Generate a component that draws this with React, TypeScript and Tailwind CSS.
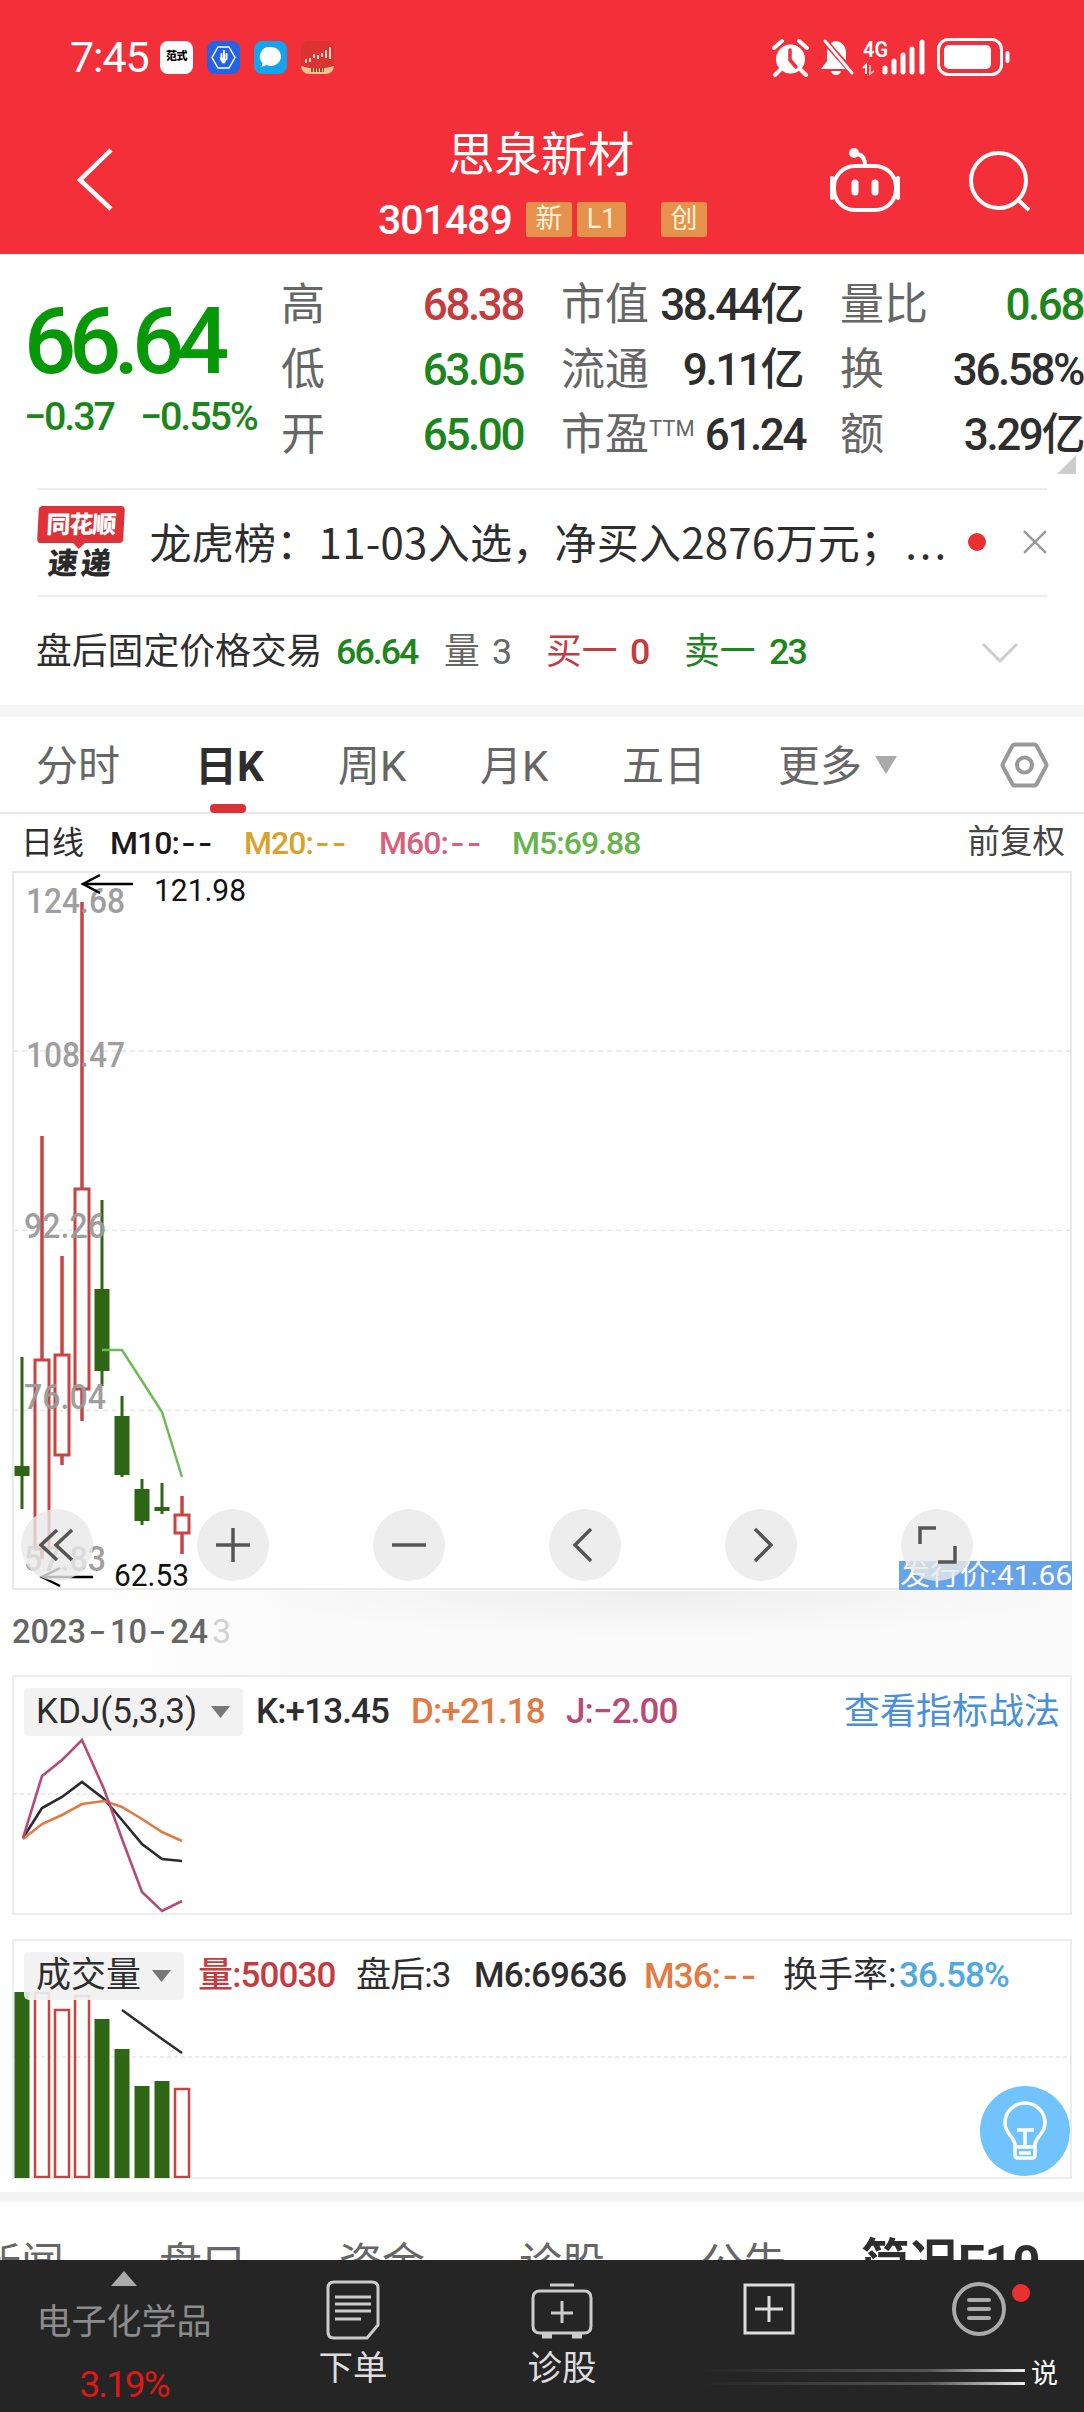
import { useState } from 'react'
import type { ReactNode } from 'react'
import clsx from 'clsx'

type Candle = {
  x: number
  high: number
  low: number
  top: number
  bottom: number
  up?: boolean
  volume: number
}

// y values are canvas coordinates, volume is the top of the bar
const candles: Candle[] = [
  { x: 22, high: 1356, low: 1508, top: 1465, bottom: 1475, volume: 1992 },
  { x: 42, high: 1135, low: 1558, top: 1359, bottom: 1548, up: true, volume: 1992 },
  { x: 62, high: 1255, low: 1464, top: 1354, bottom: 1454, up: true, volume: 2009 },
  { x: 82, high: 901, low: 1420, top: 1188, bottom: 1388, up: true, volume: 1995 },
  { x: 102, high: 1199, low: 1385, top: 1288, bottom: 1370, volume: 2019 },
  { x: 122, high: 1395, low: 1476, top: 1415, bottom: 1474, volume: 2049 },
  { x: 142, high: 1478, low: 1524, top: 1488, bottom: 1520, volume: 2086 },
  { x: 162, high: 1482, low: 1513, top: 1506, bottom: 1510, volume: 2081 },
  { x: 182, high: 1495, low: 1553, top: 1514, bottom: 1532, up: true, volume: 2088 },
]

const axis = [
  { label: '124.68', x: 26, y: 912, w: 99 },
  { label: '108.47', x: 26, y: 1066, w: 99 },
  { label: '92.26', x: 24, y: 1237, w: 82 },
  { label: '76.04', x: 24, y: 1408, w: 82 },
  { label: '57.83', x: 24, y: 1570, w: 82 },
]

const RED = '#c94343'
const GREEN = '#2f6615'

const periods = [
  { label: '分时', w: 'w-[159px]' },
  { label: '日K', w: 'w-[143px]' },
  { label: '周K', w: 'w-[142px]' },
  { label: '月K', w: 'w-[142px]' },
  { label: '五日', w: 'w-[156px]' },
]

const Dashes = () => <span className="ml-[2px] font-[family-name:Inter] tracking-[0.06em]">--</span>

const trackings = {
  tight: 'tracking-[-0.08em]',
  normal: 'tracking-[-0.055em]',
  loose: 'tracking-[-0.025em]',
}

function Num({ className, track = 'normal', children }: { className?: string; track?: keyof typeof trackings; children: ReactNode }) {
  return <span className={clsx('whitespace-nowrap', trackings[track], className)}>{children}</span>
}

function StatusBar() {
  return (
    <div className="flex h-[112px] items-center pl-[70px] pt-[3px] text-white">
      <Num track="loose" className="w-[90px] text-[43px]">7:45</Num>
      <div className="flex gap-[14px]">
        <div className="flex size-[33px] items-center justify-center rounded-lg bg-white text-[11px] font-black tracking-tighter text-black">
          范式
        </div>
        <svg className="size-[33px]" viewBox="0 0 33 33">
          <rect width="33" height="33" rx="8" fill="#2563e4" />
          <path d="M11 6h11l6 10.500-6 10.500H11L5 16.500z" fill="none" stroke="#fff" strokeWidth="1.500" />
          <path d="M12.500 16l2 5q2 3 4 0l1.500-3" fill="#fff" />
          <path d="M14.500 19v-6M17 18v-8M19.500 18v-5" fill="none" stroke="#fff" strokeWidth="2" strokeLinecap="round" />
        </svg>
        <svg className="size-[33px]" viewBox="0 0 33 33">
          <rect width="33" height="33" rx="8" fill="#14a3ef" />
          <path d="M16.500 6a10 9.500 0 1 1-4 18l-5 2 1-4A9.500 9.500 0 0 1 16.500 6z" fill="#fff" />
        </svg>
        <svg className="size-[33px]" viewBox="0 0 33 33">
          <rect width="33" height="33" rx="8" fill="#d93332" />
          <path d="M5 18v4M9 17v4M13 13v4M17 14v4M21 12v4" stroke="#ffd0c4" strokeWidth="2" />
          <path d="M25 9v8M29 6v12" stroke="#ffd0c4" strokeWidth="2" />
          <path d="M0 25q16 5 33 0a8 8 0 0 1-8 8H8a8 8 0 0 1-8-8z" fill="#f6c28f" />
          <path d="M10 29h13" stroke="#9b4a2c" strokeWidth="4" strokeDasharray="2 1" />
        </svg>
      </div>
      <svg className="ml-[438px] h-[40px] w-[240px]" viewBox="772 37 240 40" fill="none">
        <circle cx="790.500" cy="58" r="14.500" fill="#fff" />
        <path d="M774 47l8-7M807 47l-8-7M780 69l-5 5M801 69l5 5" stroke="#fff" strokeWidth="4" strokeLinecap="round" />
        <path d="M790 49v10l6 7" stroke="#f32f39" strokeWidth="3.500" strokeLinecap="round" />
        <path d="M836 40c7 1 10 6 10 12v8l5 8h-30l6-8v-8c0-6 2-11 9-12zM831 70h10q-1 4-5 4t-5-4z" fill="#fff" />
        <path d="M822 37l31 35" stroke="#f32f39" strokeWidth="6" />
        <path d="M825 40l27 32" stroke="#fff" strokeWidth="3" strokeLinecap="round" />
        <text x="863" y="56" fill="#fff" fontSize="22" fontWeight="600" textLength="25" lengthAdjust="spacingAndGlyphs">
          4G
        </text>
        <path d="M863 67l3-3v9" stroke="#fff" strokeWidth="2" />
        <path d="M870 64v9l4-3" stroke="#fff" strokeWidth="2" opacity=".6" />
        <path d="M885 67v4M894 60v11M903 54v17M912 48v23M922 41v30" stroke="#fff" strokeWidth="5" strokeLinecap="round" />
        <rect x="938.500" y="38.500" width="63" height="35" rx="10" stroke="#fff" strokeWidth="3" />
        <rect x="944" y="44" width="47" height="24" rx="5" fill="#fff" />
        <path d="M1007.500 52v8" stroke="#fff" strokeWidth="4" strokeLinecap="round" />
      </svg>
    </div>
  )
}

function Badge({ className, children }: { className?: string; children: ReactNode }) {
  return (
    <span className={clsx('flex h-[35px] items-center justify-center rounded-[3px] bg-[#e5924d] text-[27px] text-[#fff3dc]', className)}>
      {children}
    </span>
  )
}

function Header() {
  return (
    <header className="h-[254px] bg-[#f32f39] text-white">
      <StatusBar />
      <div className="flex h-[142px] items-start">
        <svg className="mt-[34px] ml-[73px] h-[68px] w-[44px]" viewBox="72 146 44 68" fill="none">
          <path d="M110 150L79 180l31 29" stroke="#fff" strokeWidth="4.500" />
        </svg>
        <div className="ml-[261px] flex w-[329px] flex-col">
          <h1 className="mt-[10px] ml-[70px] text-[46.500px] leading-[66px]">思泉新材</h1>
          <div className="mt-[12px] flex items-center">
            <Num track="loose" className="w-[148px] pt-[2px] text-[41px] leading-[36px] font-medium">301489</Num>
            <Badge className="w-[46px]">新</Badge>
            <Badge className="ml-[5px] w-[49px]">L1</Badge>
            <Badge className="ml-[35px] w-[46px]">创</Badge>
          </div>
        </div>
        <svg className="mt-[34px] ml-[121px] h-[70px] w-[208px]" viewBox="828 146 208 70" fill="none" stroke="#fff" strokeWidth="4">
          <rect x="834" y="166" width="62" height="44" rx="21" />
          <path d="M865 166q0-12-9-12" />
          <circle cx="854" cy="153" r="3" fill="#fff" />
          <path d="M832 178v20M898 178v20" strokeLinecap="round" />
          <path d="M855 183v9M875 183v9" strokeWidth="7" strokeLinecap="round" />
          <circle cx="998.500" cy="180.500" r="27.500" />
          <path d="M1017 199l12 11" />
        </svg>
      </div>
    </header>
  )
}

function Stat({ label, value, color = 'text-[#2e2e2e]', className }: { label: ReactNode; value: string; color?: string; className: string }) {
  return (
    <div className={clsx('flex h-[65px] items-center justify-between', className)}>
      <span className="text-[44px] whitespace-nowrap text-[#666]">{label}</span>
      <Num className={clsx('text-[44px] font-medium', color)}>{value}</Num>
    </div>
  )
}

function Quote() {
  const green = 'text-[#1c861c]'
  return (
    <section className="relative flex h-[234px] pt-[18px]">
      <div className="w-[281px] pl-[24px]">
        <Num track="tight" className="mt-[15px] block h-[110px] text-[92px] leading-[110px] font-medium text-[#069806]">66.64</Num>
        <div className="flex text-[39.500px] leading-[40px] font-medium text-[#1c861c]">
          <Num className="w-[116px]">−0.37</Num>
          <Num>−0.55%</Num>
        </div>
      </div>
      <div>
        <Stat className="w-[242px]" label="高" value="68.38" color="text-[#c53c3f]" />
        <Stat className="w-[242px]" label="低" value="63.05" color={green} />
        <Stat className="w-[242px]" label="开" value="65.00" color={green} />
      </div>
      <div className="ml-[38px]">
        <Stat className="w-[241px]" label="市值" value="38.44亿" />
        <Stat className="w-[241px]" label="流通" value="9.11亿" />
        <Stat
          className="w-[244px]"
          label={
            <>
              市盈<span className="inline-block -translate-y-[14px] text-[22px]">TTM</span>
            </>
          }
          value="61.24"
        />
      </div>
      <div className="ml-[35px]">
        <Stat className="w-[243px]" label="量比" value="0.68" color={green} />
        <Stat className="w-[243px]" label="换" value="36.58%" />
        <Stat className="w-[243px]" label="额" value="3.29亿" />
      </div>
      <svg className="absolute right-[8px] bottom-[14px] size-[19px]" viewBox="0 0 19 19">
        <path d="M19 0v19H0z" fill="#ccc" />
      </svg>
    </section>
  )
}

function NewsStrip() {
  return (
    <section className="mx-[37px] flex h-[109px] items-center border-y-2 border-[#eee]">
      <div className="flex w-[88px] flex-col items-center">
        <div className="relative flex h-[37px] w-[86px] -skew-x-3 items-center justify-center rounded-[4px] bg-[#dd3238] text-[24px] font-black tracking-[-1px] text-white">
          同花顺
          <svg className="absolute -bottom-[6px] left-[35px] h-[7px] w-[14px]" viewBox="0 0 14 7">
            <path d="M0 0h14L7 7z" fill="#dd3238" />
          </svg>
        </div>
        <div className="mt-[5px] -skew-x-6 text-[30px] leading-[31px] font-black tracking-[3px] text-[#2a2a2a]">速递</div>
      </div>
      <p className="-mt-[5px] ml-[25px] w-[801px] font-[family-name:Noto_Sans_CJK_SC] text-[42px] tracking-[0.25px] whitespace-nowrap text-[#2e2e2e]">
        龙虎榜：11-03入选，净买入2876万元；<span className="ml-[3px] tracking-[3px]">...</span>
      </p>
      <span className="ml-[19px] size-[18px] -translate-y-px rounded-full bg-[#ea3030]" />
      <svg className="ml-[37px] size-[24px] -translate-y-px" viewBox="0 0 24 24">
        <path d="M1 1l22 22M23 1L1 23" stroke="#999" strokeWidth="2.500" />
      </svg>
    </section>
  )
}

function AfterHours() {
  return (
    <section className="flex h-[108px] items-center pt-[4px] pl-[36px] text-[35.800px] whitespace-nowrap">
      <span className="w-[300px] text-[#2e2e2e]">盘后固定价格交易</span>
      <Num className="w-[108px] font-medium text-[#1c861c]">66.64</Num>
      <span className="w-[48px] text-[#666]">量</span>
      <span className="w-[54px] text-[#666]">3</span>
      <span className="w-[84px] text-[#c53c3f]">买一</span>
      <span className="w-[54px] font-medium text-[#c53c3f]">0</span>
      <span className="w-[85px] text-[#1c861c]">卖一</span>
      <Num className="font-medium text-[#1c861c]">23</Num>
      <svg className="mr-[66px] ml-auto h-[22px] w-[36px]" viewBox="0 0 36 22" fill="none">
        <path d="M1 2l17 17L35 2" stroke="#ccc" strokeWidth="3" />
      </svg>
    </section>
  )
}

function PeriodTabs({ active, onChange }: { active: string; onChange: (p: string) => void }) {
  return (
    <nav className="flex h-[97px] items-stretch border-b-2 border-[#e8e8e8] pl-[36px] text-[42px] text-[#666]">
      {periods.map((p) => (
        <button
          key={p.label}
          onClick={() => onChange(p.label)}
          className={clsx('relative pt-[4px] text-left whitespace-nowrap', p.w, active === p.label && 'font-bold text-[#2e2e2e]')}
        >
          {p.label}
          {active === p.label && <span className="absolute bottom-[-1px] left-[15px] h-[9px] w-[36px] rounded-[4px] bg-[#dd3235]" />}
        </button>
      ))}
      <button className="flex items-center gap-[13px] pt-[4px] whitespace-nowrap">
        更多
        <svg className="mb-[3px] h-[18px] w-[22px]" viewBox="0 0 22 18">
          <path d="M0 0h22L11 18z" fill="#aaa" />
        </svg>
      </button>
      <svg className="mr-[35px] ml-auto h-[46px] w-[49px] self-center" viewBox="0 0 49 46" fill="none" stroke="#999" strokeWidth="4">
        <path d="M15 2.500h19q2 0 3 2l9 17q1 1.500 0 3l-9 17q-1 2-3 2H15q-2 0-3-2l-9-17q-1-1.500 0-3l9-17q1-2 3-2z" />
        <circle cx="24.500" cy="23" r="7.500" />
      </svg>
    </nav>
  )
}

function MaLegend() {
  return (
    <div className="flex h-[57px] items-center pl-[21px] text-[32px] tracking-[-0.03em] whitespace-nowrap">
      <span className="w-[89px] text-[#2e2e2e]">日线</span>
      <span className="w-[134px] font-medium text-[#1a1a1a]">M10:<Dashes /></span>
      <span className="w-[135px] font-medium text-[#d9a22a]">M20:<Dashes /></span>
      <span className="w-[133px] font-medium text-[#d8607a]">M60:<Dashes /></span>
      <span className="font-medium text-[#67b44c]">M5:69.88</span>
      <span className="mr-[19px] ml-auto text-[32.500px] tracking-normal text-[#444]">前复权</span>
    </div>
  )
}

const controls = [
  { name: '快退', d: 'M36 21L20 36l16 15M51 21L35 36l16 15' },
  { name: '放大', d: 'M36 19v34M19 36h34' },
  { name: '缩小', d: 'M19 36h34' },
  { name: '左移', d: 'M42 20L26 36l16 16' },
  { name: '右移', d: 'M30 20l16 16-16 16' },
  { name: '全屏', d: 'M19 35V19h16M37 53h17V37' },
]

function KChart() {
  return (
    <section className="relative h-[804px]">
      {/* soft shadow under the plot */}
      <div className="absolute top-[720px] right-[12px] left-[90px] h-[84px] bg-linear-to-r from-white via-[#fafafa] via-20% to-[#fafafa]" />
      <div className="absolute top-[720px] right-[12px] left-[250px] h-[46px] bg-radial-[at_50%_0%] from-[#eeeeee] to-transparent to-70%" />
      <svg className="absolute inset-0 h-[804px] w-[1084px]" viewBox="0 870 1084 804" fill="none">
        <rect x="13" y="871" width="1058" height="717" stroke="#e9e9e9" strokeWidth="2" />
        <path d="M13 1050h1058M13 1229.500h1058M13 1409.500h1058" stroke="#e6e6e6" strokeWidth="1.500" strokeDasharray="5 4" />
        {candles.map((c) =>
          c.up ? (
            <g key={c.x} stroke={RED} strokeWidth="3.500">
              <path d={`M${c.x} ${c.high}V${c.top}M${c.x} ${c.bottom}V${c.low}`} />
              <rect x={c.x - 7} y={c.top} width="14" height={c.bottom - c.top} strokeWidth="3" />
            </g>
          ) : (
            <g key={c.x} fill={GREEN}>
              <rect x={c.x - 1.5} y={c.high} width="3" height={c.low - c.high} />
              <rect x={c.x - 7.5} y={c.top} width="15" height={c.bottom - c.top} />
            </g>
          ),
        )}
        <path d="M102 1349h20l20 31 20 31 20 65" stroke="#6cba55" strokeWidth="2.500" />
        <g fill="#999" fillOpacity=".95" fontSize="35" fontWeight="500">
          {axis.map((a) => (
            <text key={a.label} x={a.x} y={a.y} textLength={a.w} lengthAdjust="spacingAndGlyphs">
              {a.label}
            </text>
          ))}
        </g>
        <path d="M133 883H83M100 874l-17 9 17 9M93 1576H42M60 1567l-18 9 18 9" stroke="#000" strokeWidth="2.500" />
        <g fill="#111" fontSize="31">
          <text x="154" y="900" textLength="92" lengthAdjust="spacingAndGlyphs">121.98</text>
          <text x="114" y="1585" textLength="75" lengthAdjust="spacingAndGlyphs">62.53</text>
        </g>
        <rect x="899" y="1560" width="173" height="29" fill="#67a3ea" />
        <text x="900" y="1584" fill="#fff" fontSize="28" textLength="172" lengthAdjust="spacingAndGlyphs">
          发行价:41.66
        </text>
        <g fontSize="34">
          <g fill="#666" fontWeight="500">
            <text x="12" y="1642" textLength="74" lengthAdjust="spacingAndGlyphs">2023</text>
            <text x="89" y="1642" textLength="17" lengthAdjust="spacingAndGlyphs">-</text>
            <text x="110" y="1642" textLength="37" lengthAdjust="spacingAndGlyphs">10</text>
            <text x="149" y="1642" textLength="17" lengthAdjust="spacingAndGlyphs">-</text>
            <text x="170" y="1642" textLength="38" lengthAdjust="spacingAndGlyphs">24</text>
          </g>
          <text x="212" y="1642" fill="#d2d2d2">3</text>
        </g>
      </svg>
      <div className="absolute top-[638px] left-[21px] flex gap-[104px]">
        {controls.map((c) => (
          <button key={c.name} aria-label={c.name} className="size-[72px] rounded-full bg-[#e8e8e8]/80">
            <svg viewBox="0 0 72 72" fill="none" stroke="#555" strokeWidth="3.500">
              <path d={c.d} />
            </svg>
          </button>
        ))}
      </div>
    </section>
  )
}

function Picker({ className, children }: { className: string; children: ReactNode }) {
  return (
    <button className={clsx('flex h-[48px] items-center rounded-[5px] bg-[#f1f1f1]/90 pl-[12px] whitespace-nowrap text-[#2e2e2e]', className)}>
      {children}
      <svg className="mr-[13px] ml-auto h-[12px] w-[19px]" viewBox="0 0 19 12">
        <path d="M0 0h19L9.500 12z" fill="#777" />
      </svg>
    </button>
  )
}

function Kdj() {
  return (
    <section className="relative mx-[12px] h-[240px] border-2 border-[#ececec]">
      <svg className="absolute -top-[3px] -left-[2px] h-[240px] w-[1060px]" viewBox="12 1674 1060 240" fill="none" strokeWidth="2.600">
        <path d="M13 1794h1058" stroke="#e6e6e6" strokeWidth="1.500" strokeDasharray="4 3" />
        <path d="M23 1838L42 1808 62 1797 82 1782 104 1799 122 1820 142 1844 162 1859 182 1861" stroke="#2a2a30" />
        <path d="M23 1839L42 1824 62 1815 82 1804 104 1801 122 1807 142 1819 162 1832 182 1841" stroke="#e27a43" />
        <path d="M23 1838L42 1776 62 1760 82 1740 104 1789 122 1839 142 1892 162 1911 182 1901" stroke="#b84a78" />
      </svg>
      <div className="relative flex items-center pt-[8px] pl-[10px] text-[35px] whitespace-nowrap">
        <Picker className="w-[219px]">KDJ(5,3,3)</Picker>
        <Num track="loose" className="ml-[13px] w-[155px] font-medium text-[#2e2e2e]">K:+13.45</Num>
        <Num track="loose" className="w-[155px] font-medium text-[#e27a43]">D:+21.18</Num>
        <Num track="loose" className="font-medium text-[#b84a78]">J:−2.00</Num>
        <a className="mr-[10px] ml-auto text-[36px] text-[#4a90d9]">查看指标战法</a>
      </div>
    </section>
  )
}

function Volume() {
  return (
    <section className="relative mx-[12px] mt-[24px] h-[240px] border-2 border-[#ececec]">
      <svg className="absolute -top-[3px] -left-[2px] h-[240px] w-[1060px]" viewBox="12 1938 1060 240" fill="none">
        <path d="M13 2057h1058" stroke="#e6e6e6" strokeWidth="1.500" strokeDasharray="4 3" />
        {candles.map((c) =>
          c.up ? (
            <rect key={c.x} x={c.x - 7} y={c.volume + 1} width="14" height={2176 - c.volume} stroke={RED} strokeWidth="2.500" />
          ) : (
            <rect key={c.x} x={c.x - 7.5} y={c.volume} width="15" height={2178 - c.volume} fill={GREEN} />
          ),
        )}
        <path d="M122 2010l40 29 20 14" stroke="#2e2e2e" strokeWidth="2.500" />
      </svg>
      <div className="relative flex items-center pt-[8px] pl-[10px] text-[35px] whitespace-nowrap">
        <Picker className="w-[160px]">成交量</Picker>
        <Num track="loose" className="ml-[14px] w-[158px] font-medium text-[#c53c3f]">量:50030</Num>
        <Num track="loose" className="w-[118px] text-[#2e2e2e]">盘后:3</Num>
        <Num track="loose" className="w-[170px] font-medium text-[#2e2e2e]">M6:69636</Num>
        <Num track="loose" className="w-[139px] font-medium text-[#e27a43]">M36:<Dashes /></Num>
        <span className="w-[116px] text-[#2e2e2e]">换手率:</span>
        <Num track="loose" className="font-medium text-[#4fa9dc]">36.58%</Num>
      </div>
      <button aria-label="提示" className="absolute right-0 bottom-[1px] size-[90px] rounded-full bg-[#70c3fc]">
        <svg viewBox="0 0 90 90" fill="none" stroke="#fff" strokeWidth="3.500">
          <path d="M35 59c0-8-10-11-10-22a20 20 0 0 1 40 0c0 11-10 14-10 22v10q0 3-3 3H38q-3 0-3-3zM35 61h20M37 44h17M45 44v17M39 67h12" />
        </svg>
      </button>
    </section>
  )
}

function BottomBar() {
  return (
    <footer className="flex h-[153px] bg-[#252525] text-[34.500px] text-[#ddd]">
      <div className="flex w-[248px] flex-col items-center pt-[11px] text-[35px]">
        <svg className="h-[15px] w-[26px]" viewBox="0 0 26 15">
          <path d="M13 0l13 15H0z" fill="#aaa" />
        </svg>
        <span className="mt-[12px] leading-[50px] text-[#8c8c8c]">电子化学品</span>
        <Num className="mt-[12px] text-[37px] leading-[50px] text-[#dd1818]">3.19%</Num>
      </div>
      <div className="flex w-[210px] flex-col items-center pt-[20px]">
        <svg className="h-[60px] w-[54px]" viewBox="0 0 54 60" fill="none" stroke="#ccc" strokeWidth="3">
          <path d="M8 2h38q6 0 6 6v37L41 58H8q-6 0-6-6V8q0-6 6-6z" />
          <path d="M9 17h36M9 24h36M9 31h36M9 39h26" />
        </svg>
        <span className="mt-[3px] leading-[50px]">下单</span>
      </div>
      <div className="flex w-[208px] flex-col items-center pt-[20px]">
        <svg className="h-[60px] w-[62px]" viewBox="0 0 62 60" fill="none" stroke="#ccc" strokeWidth="3">
          <path d="M19 5h24M9 11h44q7 0 7 7v28q0 7-7 7H9q-7 0-7-7V18q0-7 7-7zM31 21v22M20 33h22" />
          <path d="M11 56h10M41 56h10" strokeWidth="5" />
        </svg>
        <span className="mt-[3px] leading-[50px]">诊股</span>
      </div>
      <div className="w-[208px] pt-[23px] pl-[77px]">
        <svg className="size-[52px]" viewBox="0 0 52 52" fill="none" stroke="#ddd" strokeWidth="3.500">
          <path d="M2 2h48v48H2zM26 13v26M12 26h28" strokeWidth="3" />
        </svg>
      </div>
      <div className="relative w-[210px] pt-[21px] pl-[77px]">
        <svg className="size-[56px]" viewBox="0 0 56 56" fill="none" stroke="#aaa">
          <circle cx="28" cy="28" r="25" strokeWidth="4" />
          <path d="M18 19h20M18 28h20M18 37h20" strokeWidth="4" strokeLinecap="round" />
        </svg>
        <span className="absolute top-[24px] left-[138px] size-[18px] rounded-full bg-[#ea3030]" />
        <div className="absolute top-[109px] right-[59px] flex h-[16px] w-[325px] flex-col justify-between">
          <span className="h-[3px] bg-linear-to-r from-transparent via-[#555] via-70% to-[#eee]" />
          <span className="h-[3px] bg-linear-to-r from-transparent via-[#555] via-70% to-[#eee]" />
        </div>
        <span className="absolute top-[94px] right-[26px] text-[27px] leading-[40px] text-white">说</span>
      </div>
    </footer>
  )
}

export default function App() {
  const [period, setPeriod] = useState('日K')

  return (
    <div className="h-[2412px] w-[1084px] overflow-hidden bg-white font-[family-name:Roboto,'Noto_Sans_CJK_SC',sans-serif]">
      <Header />
      <Quote />
      <NewsStrip />
      <AfterHours />
      <div className="h-[12px] bg-[#f4f4f4]" />
      <PeriodTabs active={period} onChange={setPeriod} />
      <MaLegend />
      <KChart />
      <Kdj />
      <Volume />
      <div className="mt-[13px] h-[10px] bg-[#f4f4f4]" />
      <nav className="flex h-[58px] overflow-hidden pt-[37px] text-[43px] leading-[50px] whitespace-nowrap text-[#666]">
        <span className="-ml-[22px] w-[181px] shrink-0">新闻</span>
        <span className="w-[180px] shrink-0">盘口</span>
        <span className="w-[180px] shrink-0">资金</span>
        <span className="w-[181px] shrink-0">诊股</span>
        <span className="w-[161px] shrink-0">公告</span>
        <span className="text-[48.500px] leading-[48px] font-bold text-[#2e2e2e]">简况F10</span>
      </nav>
      <BottomBar />
    </div>
  )
}
